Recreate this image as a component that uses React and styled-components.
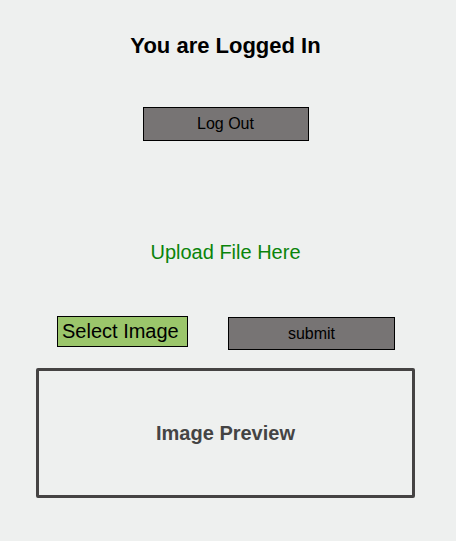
import React from "react";
import styled, { createGlobalStyle } from "styled-components";

const Global = createGlobalStyle`
  html, body { margin: 0; padding: 0; background: #eef0ef; }
  body { font-family: "Liberation Sans", Arial, sans-serif; }
`;

const Page = styled.div`
  width: 451px;
  display: flex;
  flex-direction: column;
  align-items: center;
  padding-top: 33px;
  padding-bottom: 40px;
`;

const Title = styled.h1`
  margin: 0;
  font-size: 22px;
  line-height: 25px;
  font-weight: bold;
  color: #000;
`;

const GrayButton = styled.button`
  box-sizing: border-box;
  width: ${(p) => p.$w}px;
  height: ${(p) => p.$h}px;
  margin: ${(p) => p.$m || 0};
  background: #777474;
  border: 1px solid #000;
  border-radius: 0;
  font-family: "Liberation Sans", Arial, sans-serif;
  font-size: 16px;
  color: #000;
  padding: 0;
`;

const UploadLabel = styled.div`
  margin-top: 100px;
  font-size: 20px;
  line-height: 23px;
  color: #0a840a;
`;

const Row = styled.div`
  margin-top: 52px;
  display: flex;
  align-items: flex-start;
  gap: 40px;
  padding-left: 1px;
`;

const SelectButton = styled.label`
  box-sizing: border-box;
  width: 131px;
  height: 31px;
  background: #9bc66b;
  border: 1px solid #000;
  font-size: 20px;
  line-height: 29px;
  padding-left: 4px;
  color: #000;
`;

const Preview = styled.div`
  box-sizing: border-box;
  margin-top: 18px;
  width: 379px;
  height: 130px;
  border: 3px solid #454343;
  border-radius: 2px;
  display: flex;
  align-items: center;
  justify-content: center;
  font-size: 20px;
  font-weight: bold;
  color: #444;
`;

export default function App() {
  return (
    <>
      <Global />
      <Page>
        <Title>You are Logged In</Title>
        <GrayButton $w={166} $h={34} $m="49px 0 0 0">Log Out</GrayButton>
        <UploadLabel>Upload File Here</UploadLabel>
        <Row>
          <SelectButton>Select Image</SelectButton>
          <GrayButton $w={167} $h={33} $m="1px 0 0 0">submit</GrayButton>
        </Row>
        <Preview>Image Preview</Preview>
      </Page>
    </>
  );
}
